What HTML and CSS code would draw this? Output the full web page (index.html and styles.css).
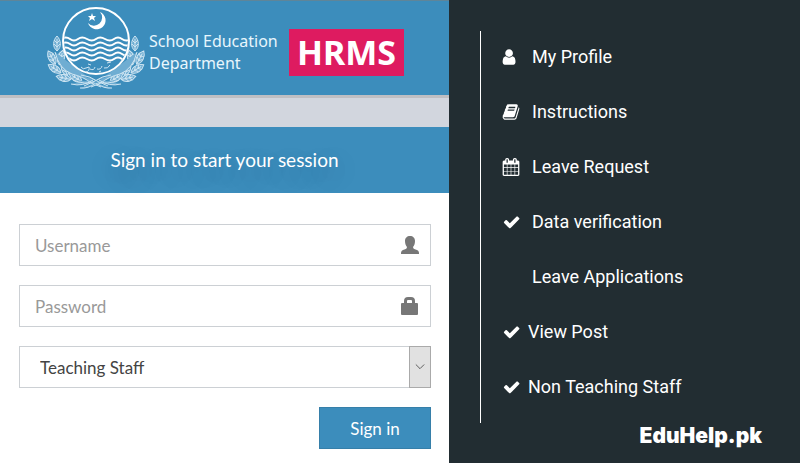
FILE: index.html
```html
<!DOCTYPE html>
<html lang="en">
<head>
    <meta charset="UTF-8">
    <meta name="viewport" content="width=device-width, initial-scale=1.0">
    <title>School Education Department HRMS</title>
    <link rel="stylesheet" href="styles.css">
</head>
<body>
    <div class="page">
        <main class="login">
            <header class="brand">
                <svg class="emblem" viewBox="0 0 100 86" aria-hidden="true">
                    <defs>
                        <g id="leaf">
                            <path d="M0 7C-5 3-4-4 0-8C4-4 5 3 0 7Z"/>
                            <path d="M0 7V-5M-3 0L0 3L3 0M-3-4L0-1L3-4"/>
                        </g>
                        <g id="wreath">
                            <use href="#leaf" transform="translate(10 39)"/>
                            <use href="#leaf" transform="translate(5 53) rotate(-28)"/>
                            <use href="#leaf" transform="translate(14 53) rotate(14)"/>
                            <use href="#leaf" transform="translate(8 64) rotate(-58)"/>
                            <use href="#leaf" transform="translate(18 64) rotate(-20)"/>
                            <use href="#leaf" transform="translate(17 73) rotate(-78)"/>
                            <use href="#leaf" transform="translate(29 73) rotate(-58)"/>
                            <path d="M8 47Q12 64 25 69Q37 72 44 78L54 82M26 75Q38 80 47 77M34 70Q43 71 50 76L61 81M33 83Q41 84 49 78M24 79Q36 82 46 75"/>
                        </g>
                        <clipPath id="disc"><circle cx="49" cy="36" r="32"/></clipPath>
                    </defs>
                    <g class="emblem-leaves">
                        <use href="#wreath"/>
                        <use href="#wreath" transform="translate(98 0) scale(-1 1)"/>
                    </g>
                    <circle class="emblem-disc" cx="49" cy="36" r="33"/>
                    <g class="emblem-waves" clip-path="url(#disc)">
                        <path d="M14 34q5-3 9 0t8 0t9 0t9 0t9 0t9 0t8 0t9 0"/>
                        <path d="M14 39q5-3 9 0t8 0t9 0t9 0t9 0t9 0t8 0t9 0"/>
                        <path d="M14 44q5-3 9 0t8 0t9 0t9 0t9 0t9 0t8 0t9 0"/>
                        <path d="M14 49q5-3 9 0t8 0t9 0t9 0t9 0t9 0t8 0t9 0"/>
                        <path d="M14 54q5-3 9 0t8 0t9 0t9 0t9 0t9 0t8 0t9 0"/>
                    </g>
                    <path class="emblem-thin" d="M34 62q2 3 5 1l3-1q1 4-3 5M43 64q4 2 5-2M50 64q4 1 5-3M57 63q4 1 6-3M41 59l3 1M60 58l4-1M52 67l2-1"/>
                    <path class="emblem-solid" d="M53 7A9 9 0 1 1 41 18A7.500 7.500 0 1 0 53 7Z"/>
                    <path class="emblem-solid" d="M45 8L46 11L49 11L47 13L48 16L45 14L42 16L43 13L41 11L44 11Z"/>
                </svg>
                <p class="department">School Education<br>Department</p>
                <strong class="hrms">HRMS</strong>
            </header>
            <h1 class="login-title">Sign in to start your session</h1>
            <form class="login-form">
                <div class="field">
                    <input class="control" type="text" placeholder="Username" aria-label="Username">
                    <svg class="field-icon" viewBox="0 0 20 20" aria-hidden="true">
                        <path d="M10 1C7 1 5 3 5 6C5 9 6 11 7 12C7 14 5 14 3 15C1 16 1 17 1 19H19C19 17 19 16 17 15C15 14 13 14 13 12C14 11 15 9 15 6C15 3 13 1 10 1Z"/>
                    </svg>
                </div>
                <div class="field">
                    <input class="control" type="password" placeholder="Password" aria-label="Password">
                    <svg class="field-icon" viewBox="0 0 20 20" aria-hidden="true">
                        <path fill-rule="evenodd" d="M4 7V5Q4 1 8 1H11Q15 1 15 5V7H17Q18 7 18 8V18Q18 19 17 19H2Q1 19 1 18V8Q1 7 2 7ZM7 7H12V5Q12 4 11 4H8Q7 4 7 5Z"/>
                    </svg>
                </div>
                <div class="field">
                    <select class="control staff" aria-label="Staff type">
                        <option>Teaching Staff</option>
                        <option>Non Teaching Staff</option>
                    </select>
                    <span class="arrow">
                        <svg viewBox="0 0 12 8" aria-hidden="true"><path d="M1 1L6 6L11 1"/></svg>
                    </span>
                </div>
                <button class="sign-in" type="submit">Sign in</button>
            </form>
        </main>

        <aside class="sidebar">
            <nav>
                <ul class="menu">
                    <li><a href="#">
                        <svg class="menu-icon" viewBox="0 0 1792 1792" aria-hidden="true"><path d="M1344 1399q0 109-62.500 187t-150.500 78h-854q-88 0-150.500-78t-62.500-187q0-85 8.500-160.500t31.500-152 58.500-131 94-89 134.500-34.500q131 128 313 128t313-128q76 0 134.500 34.500t94 89 58.500 131 31.500 152 8.500 160.500zm-256-887q0 159-112.500 271.500t-271.500 112.500-271.500-112.500-112.500-271.500 112.500-271.500 271.500-112.500 271.500 112.500 112.500 271.500z"/></svg>
                        My Profile</a></li>
                    <li><a href="#">
                        <svg class="menu-icon" viewBox="0 0 1792 1792" aria-hidden="true"><path d="M1703 478q40 57 18 129l-275 906q-19 64-76.500 107.500t-122.500 43.500h-923q-77 0-148.500-53.500t-99.500-131.500q-24-67-2-127 0-4 3-27t4-37q1-8-3-21.500t-3-19.500q2-11 8-21t16.500-23.500 16.500-23.500q23-38 45-91.500t30-91.500q3-10 .5-30t-.5-28q3-11 17-28t17-23q21-36 42-92t25-90q1-9-2.500-32t.5-28q4-13 22-30.500t22-22.500q19-26 42.500-84.500t27.500-96.500q1-8-3-25.500t-2-26.500q2-8 9-18t18-23 17-21q8-12 16.500-30.500t15-35 16-36 19.500-32 26.500-23.500 36-11.500 47.500 5.500l-1 3q38-9 51-9h761q74 0 114 56t18 130l-274 906q-36 119-71.500 153.500t-128.500 34.500h-869q-27 0-38 15-11 16-1 43 24 70 144 70h923q29 0 56-15.500t35-41.500l300-987q7-22 5-57 38 15 59 43zm-1064 2q-4 13 2 22.500t20 9.500h608q13 0 25.500-9.500t16.500-22.500l21-64q4-13-2-22.500t-20-9.500h-608q-13 0-25.500 9.500t-16.500 22.500zm-83 256q-4 13 2 22.500t20 9.500h608q13 0 25.500-9.500t16.500-22.500l21-64q4-13-2-22.500t-20-9.500h-608q-13 0-25.500 9.500t-16.500 22.500z"/></svg>
                        Instructions</a></li>
                    <li><a href="#">
                        <svg class="menu-icon" viewBox="0 0 1792 1792" aria-hidden="true"><path d="M192 1664h288v-288h-288v288zm352 0h320v-288h-320v288zm-352-352h288v-320h-288v320zm352 0h320v-320h-320v320zm-352-384h288v-288h-288v288zm736 736h320v-288h-320v288zm-384-736h320v-288h-320v288zm768 736h288v-288h-288v288zm-384-352h320v-320h-320v320zm-352-864v-288q0-13-9.500-22.500t-22.500-9.500h-64q-13 0-22.500 9.500t-9.500 22.500v288q0 13 9.500 22.500t22.500 9.500h64q13 0 22.500-9.500t9.500-22.500zm736 864h288v-320h-288v320zm-384-384h320v-288h-320v288zm384 0h288v-288h-288v288zm32-480v-288q0-13-9.500-22.500t-22.500-9.500h-64q-13 0-22.500 9.500t-9.500 22.500v288q0 13 9.500 22.500t22.500 9.500h64q13 0 22.500-9.500t9.500-22.500zm384-64v1280q0 52-38 90t-90 38h-1408q-52 0-90-38t-38-90v-1280q0-52 38-90t90-38h128v-96q0-66 47-113t113-47h64q66 0 113 47t47 113v96h384v-96q0-66 47-113t113-47h64q66 0 113 47t47 113v96h128q52 0 90 38t38 90z"/></svg>
                        Leave Request</a></li>
                    <li><a href="#">
                        <svg class="menu-icon" viewBox="0 0 1792 1792" aria-hidden="true"><path d="M1735 566q0 40-28 68l-724 724-136 136q-28 28-68 28t-68-28l-136-136-362-362q-28-28-28-68t28-68l136-136q28-28 68-28t68 28l294 295 656-657q28-28 68-28t68 28l136 136q28 28 28 68z"/></svg>
                        Data verification</a></li>
                    <li><a href="#">
                        <span class="menu-icon"></span>
                        Leave Applications</a></li>
                    <li><a class="tight" href="#">
                        <svg class="menu-icon" viewBox="0 0 1792 1792" aria-hidden="true"><path d="M1735 566q0 40-28 68l-724 724-136 136q-28 28-68 28t-68-28l-136-136-362-362q-28-28-28-68t28-68l136-136q28-28 68-28t68 28l294 295 656-657q28-28 68-28t68 28l136 136q28 28 28 68z"/></svg>
                        View Post</a></li>
                    <li><a class="tight" href="#">
                        <svg class="menu-icon" viewBox="0 0 1792 1792" aria-hidden="true"><path d="M1735 566q0 40-28 68l-724 724-136 136q-28 28-68 28t-68-28l-136-136-362-362q-28-28-28-68t28-68l136-136q28-28 68-28t68 28l294 295 656-657q28-28 68-28t68 28l136 136q28 28 28 68z"/></svg>
                        Non Teaching Staff</a></li>
                </ul>
            </nav>
            <p class="site">EduHelp.pk</p>
        </aside>
    </div>
</body>
</html>
```
FILE: styles.css
```css
* {
    box-sizing: border-box;
}
body {
    margin: 0;
    font-family: Lato, sans-serif;
    background-color: #222d32;
}
.page {
    display: grid;
    grid-template-columns: 449fr 351fr;
    min-height: 100vh;
}
.login {
    background-color: #fff;
}
.brand {
    display: flex;
    align-items: center;
    height: 98px;
    padding: 0 45px 0 47px;
    background-color: #3c8dbc;
    border-top: 1px solid #5f8599;
    border-bottom: 3px solid #bfbfc3;
}
.emblem {
    flex: none;
    width: 100px;
    height: 86px;
    fill: none;
    stroke: #fff;
}
.emblem-thin {
    stroke: #cfe5f2;
    stroke-width: 1;
}
.emblem-leaves {
    fill: #6fadd2;
    stroke: #cfe5f2;
    stroke-width: 1;
}
.emblem-disc {
    fill: #3c8dbc;
    stroke-width: 2;
}
.emblem-waves {
    stroke-width: 2;
}
.emblem-solid {
    fill: #fff;
    stroke: none;
}
.department {
    margin: 8px 0 0 2px;
    font-family: "Noto Sans", sans-serif;
    font-size: 16px;
    line-height: 22px;
    color: #e8f6fd;
    white-space: nowrap;
}
.hrms {
    margin: 8px 0 0 auto;
    padding: 0 8px;
    font-family: "Noto Sans", sans-serif;
    font-size: 34px;
    line-height: 47px;
    color: #fff;
    background-color: #de1b60;
}
.login-title {
    margin: 0;
    padding: 20px;
    border-top: 29px solid #d2d6de;
    background-color: #3c8dbc;
    font-size: 19px;
    font-weight: 400;
    line-height: 26px;
    text-align: center;
    color: #fff;
    text-shadow: 0 8px 30px rgba(0, 0, 0, 0.3);
}
.login-form {
    display: flex;
    flex-direction: column;
    gap: 19px;
    padding: 31px 18px 13px 19px;
}
.field {
    position: relative;
}
.control {
    display: block;
    width: 100%;
    height: 42px;
    padding: 0 48px 0 15px;
    border: 1px solid #ccd0d4;
    border-radius: 0;
    background-color: #fff;
    font-family: inherit;
    font-size: 17px;
    color: #444;
}
.control::placeholder {
    color: #999;
    opacity: 1;
}
.staff {
    padding-left: 20px;
    appearance: none;
}
.field-icon {
    position: absolute;
    top: 11px;
    right: 11px;
    width: 20px;
    height: 20px;
    fill: #777;
}
.arrow {
    position: absolute;
    top: 0;
    right: 0;
    bottom: 0;
    display: flex;
    align-items: center;
    justify-content: center;
    width: 22px;
    border: 1px solid #aaa;
    background-color: #e1e1e1;
    pointer-events: none;
}
.arrow svg {
    width: 10px;
    height: 8px;
    fill: none;
    stroke: #444;
}
.sign-in {
    align-self: flex-end;
    width: 112px;
    height: 42px;
    border: 1px solid #367fa9;
    background-color: #3c8dbc;
    font-family: inherit;
    font-size: 17px;
    color: #fff;
}
.sidebar {
    display: flex;
    flex-direction: column;
    padding: 31px 38px 0 31px;
    font-family: Roboto, sans-serif;
    color: #fff;
}
.menu {
    display: flex;
    flex-direction: column;
    gap: 31px;
    margin: 0;
    padding: 14px 0 24px 21px;
    border-left: 1px solid #fff;
    list-style: none;
}
.menu a {
    display: flex;
    align-items: center;
    gap: 12px;
    font-size: 18px;
    line-height: 24px;
    color: #fff;
    text-decoration: none;
}
.menu .tight {
    gap: 8px;
}
.menu-icon {
    width: 18px;
    height: 18px;
    fill: #fff;
}
.site {
    margin: 0;
    font-family: Inter, sans-serif;
    font-size: 21px;
    font-weight: 900;
    line-height: 26px;
    text-align: right;
}
```
